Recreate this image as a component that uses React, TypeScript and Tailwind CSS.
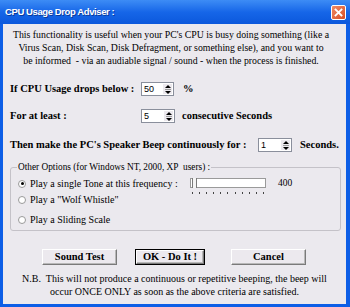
import React from "react";

function Spin({ value, w }: { value: string; w: string }) {
  return (
    <div className={`${w} h-[14px] bg-white border border-[#8a8f9c] flex items-stretch`}>
      <span className="flex-1 pl-[2px] text-[9px] leading-[12px] font-normal font-['Liberation_Sans',Arial,sans-serif]">
        {value}
      </span>
      <div className="w-[9px] bg-[#ece9ee] flex flex-col items-center justify-center gap-[1px] mr-[1px] my-[1px]">
        <div className="w-0 h-0 border-l-[3px] border-r-[3px] border-b-[3px] border-l-transparent border-r-transparent border-b-black" />
        <div className="w-[6px] h-[1px] bg-[#9a9a9a]" />
        <div className="w-0 h-0 border-l-[3px] border-r-[3px] border-t-[3px] border-l-transparent border-r-transparent border-t-black" />
      </div>
    </div>
  );
}

function Radio({ checked }: { checked?: boolean }) {
  return (
    <div className="w-[8px] h-[8px] rounded-full border border-[#9a9a9a] bg-white flex items-center justify-center shrink-0">
      {checked && <div className="w-[3px] h-[3px] rounded-full bg-black" />}
    </div>
  );
}

function Btn({ label, w, focus }: { label: string; w: string; focus?: boolean }) {
  return (
    <div className={`${w} h-[16px] ${focus ? "border border-black" : ""} bg-[#ece9ee] flex`}>
      <div className="flex-1 flex items-center justify-center border-t border-l border-t-white border-l-white border-b border-r border-b-[#7a7a7a] border-r-[#7a7a7a] shadow-[inset_-1px_-1px_0_#b8b8b8]">
        <span className="font-bold text-[10.5px] leading-[12px] text-black">{label}</span>
      </div>
    </div>
  );
}

export default function App() {
  return (
    <div className="w-[350px] h-[307px] bg-[#0d5ee6] flex flex-col overflow-hidden font-['Liberation_Serif','Times_New_Roman',serif]">
      {/* Title bar */}
      <div className="h-[24px] shrink-0 flex items-center justify-between pl-[5px] pr-[4px] bg-gradient-to-b from-[#3d8cf5] via-[#1666e8] to-[#0b58dc]">
        <span className="text-white font-bold text-[9.5px] tracking-[-0.4px] font-['Liberation_Sans',Arial,sans-serif] [text-shadow:1px_1px_0_#0a3a9a]">
          CPU Usage Drop Adviser :
        </span>
        <div className="w-[15px] h-[15px] rounded-[2px] border border-white bg-gradient-to-br from-[#ee8a64] to-[#d84c22] flex items-center justify-center">
          <svg width="9" height="9" viewBox="0 0 9 9">
            <path d="M1.5 1.5 L7.5 7.5 M7.5 1.5 L1.5 7.5" stroke="white" strokeWidth="1.8" strokeLinecap="square" />
          </svg>
        </div>
      </div>

      {/* Body */}
      <div className="flex-1 ml-[3px] mr-[4px] mb-[3px] bg-[#ebe9ee] flex flex-col text-black">
        <p className="mt-[4px] mr-[7px] text-center text-[9.8px] leading-[13px] whitespace-nowrap">
          This functionality is useful when your PC's CPU is busy doing something (like a
          <br />
          Virus Scan, Disk Scan, Disk Defragment, or something else), and you want to
          <br />
          be informed&nbsp; - via an audiable signal / sound - when the process is finished.
        </p>

        <div className="pl-[7px] flex flex-col">
          <div className="mt-[15px] flex items-center h-[14px] font-bold text-[10.5px]">
            <span className="w-[131px]">If CPU Usage drops below :</span>
            <Spin value="50" w="w-[33px]" />
            <span className="ml-[9px]">%</span>
          </div>
          <div className="mt-[13px] flex items-center h-[14px] font-bold text-[10.5px]">
            <span className="w-[131px]">For at least :</span>
            <Spin value="5" w="w-[34px]" />
            <span className="ml-[7px]">consecutive Seconds</span>
          </div>
          <div className="mt-[15px] flex items-center h-[14px] font-bold text-[10.5px]">
            <span className="w-[248px]">Then make the PC's Speaker Beep continuously for :</span>
            <Spin value="1" w="w-[34px]" />
            <span className="ml-[8px]">Seconds.</span>
          </div>
        </div>

        <fieldset className="mt-[9px] ml-[7px] mr-[5px] border border-[#c4c2c8] rounded-[3px] pb-[4px] text-[10px]">
          <legend className="ml-[6px] px-[1px] leading-[13px] text-[9.3px]">
            Other Options (for Windows NT, 2000, XP&nbsp; users) :
          </legend>
          <div className="mt-[3px] h-[13px] flex items-center pl-[7px]">
            <Radio checked />
            <span className="ml-[4px] w-[160px]">Play a single Tone at this frequency :</span>
            <div className="h-[13px] flex flex-col w-[76px]">
              <div className="h-[10px] mt-[1px] bg-white border border-[#9a9a9a] flex items-center">
                <div className="w-[5px] h-[10px] border-l border-r border-[#7a7a7a] bg-[#f4f4f4] ml-[1px]" />
              </div>
              <div className="mt-[4px] flex justify-between px-[2px]">
                {Array.from({ length: 11 }).map((_, i) => (
                  <div key={i} className="w-[1px] h-[2px] bg-[#444]" />
                ))}
              </div>
            </div>
            <span className="ml-[12px] text-[9.5px]">400</span>
          </div>
          <div className="mt-[3px] h-[13px] flex items-center pl-[7px]">
            <Radio />
            <span className="ml-[4px]">Play a "Wolf Whistle"</span>
          </div>
          <div className="mt-[7px] h-[13px] flex items-center pl-[7px]">
            <Radio />
            <span className="ml-[4px]">Play a Sliding Scale</span>
          </div>
        </fieldset>

        <div className="mt-[18px] flex items-center pl-[39px]">
          <Btn label="Sound Test" w="w-[75px]" />
          <div className="ml-[18px]">
            <Btn label="OK - Do It !" w="w-[70px]" focus />
          </div>
          <div className="ml-[26px]">
            <Btn label="Cancel" w="w-[75px]" />
          </div>
        </div>

        <p className="mt-[7px] text-center text-[10px] leading-[13px] whitespace-nowrap">
          N.B.&nbsp; This will not produce a continuous or repetitive beeping, the beep will
          <br />
          occur ONCE ONLY as soon as the above criteria are satisfied.
        </p>
      </div>
    </div>
  );
}
